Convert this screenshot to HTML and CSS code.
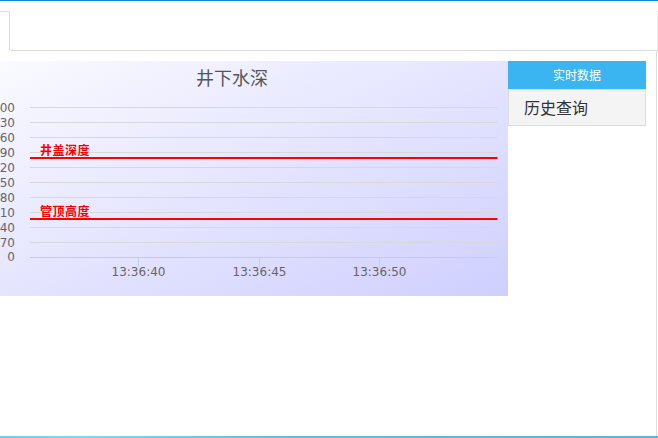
FILE: index.html
```html
<!DOCTYPE html>
<html>
<head>
<meta charset="utf-8">
<link rel="stylesheet" href="styles.css">
</head>
<body>
<div class="topline"></div>
<div class="tabbar">
  <div class="tab"></div>
  <div class="tabfill"></div>
</div>
<div class="panel">
  <div class="chart">
    <svg width="508" height="235" viewBox="0 0 508 235" xmlns="http://www.w3.org/2000/svg">
      <defs>
        <linearGradient id="bg" x1="0" y1="0" x2="1" y2="1">
          <stop offset="0" stop-color="#fafaff"/>
          <stop offset="1" stop-color="#cfcfff"/>
        </linearGradient>
      </defs>
      <rect x="0" y="0" width="508" height="235" fill="url(#bg)"/>
      <text class="title" x="232" y="24" text-anchor="middle">井下水深</text>
      <g class="grid">
        <line x1="30" y1="46.5" x2="497.5" y2="46.5"/>
        <line x1="30" y1="61.5" x2="497.5" y2="61.5"/>
        <line x1="30" y1="76.5" x2="497.5" y2="76.5"/>
        <line x1="30" y1="91.5" x2="497.5" y2="91.5"/>
        <line x1="30" y1="106.5" x2="497.5" y2="106.5"/>
        <line x1="30" y1="121.5" x2="497.5" y2="121.5"/>
        <line x1="30" y1="136.5" x2="497.5" y2="136.5"/>
        <line x1="30" y1="151.5" x2="497.5" y2="151.5"/>
        <line x1="30" y1="166.5" x2="497.5" y2="166.5"/>
        <line x1="30" y1="181.5" x2="497.5" y2="181.5"/>
      </g>
      <g class="axis">
        <line x1="30" y1="196.5" x2="497.5" y2="196.5"/>
        <line x1="138.5" y1="196" x2="138.5" y2="206"/>
        <line x1="259.5" y1="196" x2="259.5" y2="206"/>
        <line x1="379.5" y1="196" x2="379.5" y2="206"/>
      </g>
      <g class="ylab" text-anchor="end">
        <text x="15" y="51">3700</text>
        <text x="15" y="66">3330</text>
        <text x="15" y="81">2960</text>
        <text x="15" y="96">2590</text>
        <text x="15" y="111">2220</text>
        <text x="15" y="126">1850</text>
        <text x="15" y="141">1480</text>
        <text x="15" y="156">1110</text>
        <text x="15" y="171">740</text>
        <text x="15" y="186">370</text>
        <text x="15" y="200">0</text>
      </g>
      <g class="xlab" text-anchor="middle">
        <text x="138.5" y="215">13:36:40</text>
        <text x="259.5" y="215">13:36:45</text>
        <text x="379.5" y="215">13:36:50</text>
      </g>
      <line class="plotline" x1="30" y1="97" x2="497.5" y2="97"/>
      <line class="plotline" x1="30" y1="158" x2="497.5" y2="158"/>
      <text class="pllab" x="40" y="94">井盖深度</text>
      <text class="pllab" x="40" y="155">管顶高度</text>
    </svg>
  </div>
  <div class="menu">
    <div class="menu-active">实时数据</div>
    <div class="menu-item">历史查询</div>
  </div>
</div>
<div class="bottomline"></div>
</body>
</html>
```
FILE: styles.css
```css
html, body {
  margin: 0;
  padding: 0;
  background: #ffffff;
}
body {
  width: 658px;
  height: 438px;
  overflow: hidden;
  font-family: "Noto Sans CJK SC", "DejaVu Sans", sans-serif;
}
.topline {
  height: 1px;
  background: #0a86d2;
}
.tabbar {
  display: flex;
  margin-top: 10px;
  height: 40px;
}
.tab {
  box-sizing: border-box;
  width: 10px;
  height: 39px;
  border-top: 1px solid #dcdcdc;
  border-right: 1px solid #dcdcdc;
}
.tabfill {
  box-sizing: border-box;
  flex: 1;
  height: 40px;
  border-bottom: 1px solid #dcdcdc;
  border-right: 1px solid #ececec;
}
.panel {
  box-sizing: border-box;
  width: 657px;
  height: 385px;
  padding-top: 10px;
  border-right: 1px solid #dcdcdc;
  display: flex;
  align-items: flex-start;
}
.chart {
  width: 508px;
  height: 235px;
  flex: none;
}
.chart svg {
  display: block;
}
.title {
  font-family: "Noto Sans CJK SC", sans-serif;
  font-size: 18px;
  fill: #555555;
}
.grid line {
  stroke: #d8d8d8;
  stroke-width: 1;
}
.axis line {
  stroke: #c0d0e0;
  stroke-width: 1;
}
.ylab text, .xlab text {
  font-family: "DejaVu Sans", sans-serif;
  font-size: 12px;
  fill: #666666;
}
.plotline {
  stroke: #ff0000;
  stroke-width: 2;
}
.pllab {
  font-family: "Noto Sans CJK SC", sans-serif;
  font-size: 12px;
  font-weight: bold;
  letter-spacing: 0.5px;
  fill: #ff0000;
}
.menu {
  width: 138px;
  flex: none;
}
.menu-active {
  height: 28px;
  background: #3bb5f1;
  color: #ffffff;
  font-size: 12px;
  line-height: 28px;
  text-align: center;
}
.menu-item {
  box-sizing: border-box;
  height: 37px;
  background: #f4f4f4;
  border: 1px solid #dddddd;
  color: #333333;
  font-size: 16px;
  line-height: 35px;
  padding-left: 15px;
}
.bottomline {
  height: 2px;
  background: linear-gradient(to right, #6dcdea 0%, #7ed9f3 12%, #5fbbe0 45%, #5ab4dc 100%);
}
```
